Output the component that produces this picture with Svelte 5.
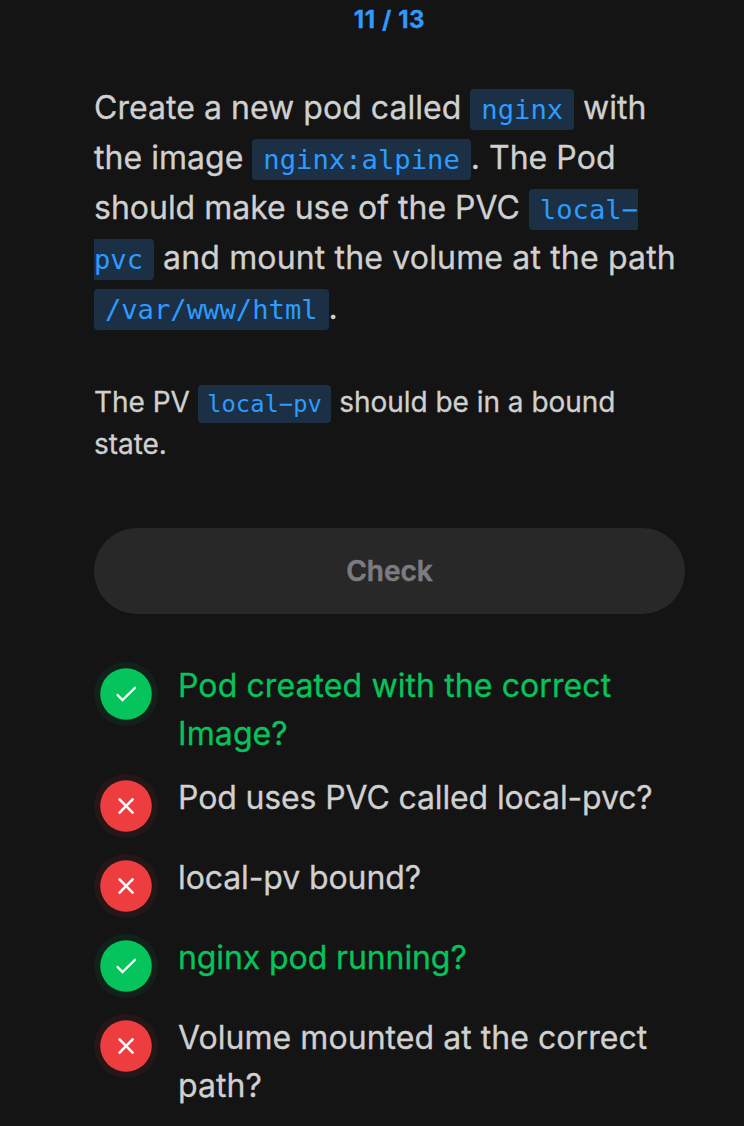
<script>
  const checks = [
    { ok: true, text: 'Pod created with the correct Image?', tracking: 0.1 },
    { ok: false, text: 'Pod uses PVC called local-pvc?', tracking: -0.13 },
    { ok: false, text: 'local-pv bound?', tracking: -0.1 },
    { ok: true, text: 'nginx pod running?', tracking: -0.1 },
    { ok: false, text: 'Volume mounted at the correct path?', tracking: 0.05 }
  ];
</script>

<main>
  <header>11 / 13</header>
  <p class="task">
    Create a new pod called <code>nginx</code> with<br />the image <code>nginx:alpine</code>. The Pod<br /><span class="snug">should make use of the PVC</span> <code>local−<br />pvc</code> <span class="wide">and mount the volume at the path</span><br /><code>/var/www/html</code>.
  </p>
  <p class="note">The PV <code>local−pv</code> should be in a bound<br />state.</p>
  <button>Check</button>
  <ul>
    {#each checks as c}
      <li class:ok={c.ok}>
        <svg width="64" height="64" viewBox="0 0 64 64">
          <circle class="halo" cx="32" cy="32" r="32" />
          <circle class="disc" cx="32" cy="32" r="25.8" />
          {#if c.ok}
            <path d="M23.6 33L28.5 38L41 25.7" />
          {:else}
            <path class="cross" d="M25.6 25.4L38.6 38.6M38.6 25.4L25.6 38.6" />
          {/if}
        </svg>
        <span style:letter-spacing="{c.tracking}px">{c.text}</span>
      </li>
    {/each}
  </ul>
</main>

<style>
  :global(body) { background: #141414; }
  main {
    box-sizing: border-box;
    height: 1126px;
    overflow: hidden;
    padding: 0 59px 0 94px;
    color: #d0d0d0;
    font-family: Inter, sans-serif;
    -webkit-text-stroke: 0.3px currentColor;
  }
  header {
    height: 83px;
    line-height: 40px;
    text-align: center;
    font-size: 24px;
    font-weight: 700;
    letter-spacing: 0.6px;
    color: #2e9bff;
  }
  p { margin: 0; white-space: nowrap; }
  .task { font-size: 32px; line-height: 50px; height: 295px; letter-spacing: 0.04px; }
  .snug { letter-spacing: -0.01px; }
  .wide { letter-spacing: 0.16px; }
  .note { font-size: 28px; line-height: 42px; height: 147px; padding-top: 3px; letter-spacing: -0.03px; }
  code {
    font-family: "DejaVu Sans Mono", monospace;
    font-size: 27.2px;
    line-height: 1;
    letter-spacing: 0;
    color: #2e9bff;
    background: #1b3044;
    border-radius: 4px;
    padding: 5px 0.4em;
    -webkit-text-stroke: 0;
  }
  .note code { font-size: 23.8px; }
  button {
    display: block;
    width: 100%;
    height: 86px;
    border: 0;
    border-radius: 43px;
    background: #282828;
    color: #7c7b82;
    font: 600 28px Inter, sans-serif;
    -webkit-text-stroke: 0.5px currentColor;
  }
  ul { list-style: none; margin: 48px 0 0; padding: 0; display: flex; flex-direction: column; gap: 16px; }
  li { display: flex; gap: 20px; min-height: 64px; font-size: 32px; line-height: 48px; }
  svg { flex: none; }
  .halo { fill: #251718; }
  .disc { fill: #ee3d3f; }
  .ok { color: #05c45b; }
  .ok .halo { fill: #12211a; }
  .ok .disc { fill: #04c45b; }
  path { fill: none; stroke: #fff; stroke-width: 2.3; stroke-linecap: round; -webkit-text-stroke: 0; }
  .cross { stroke-width: 2.6; }
</style>
